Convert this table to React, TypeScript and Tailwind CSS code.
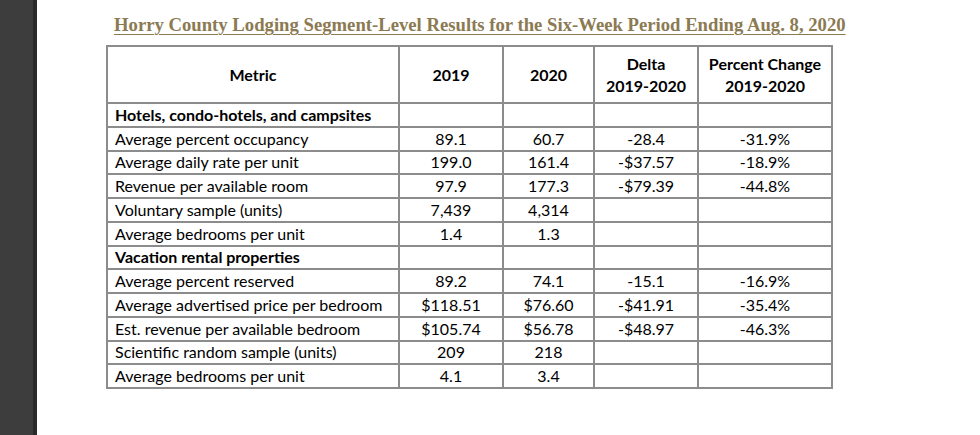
import React from "react";

type Row = { label: string; bold?: boolean; a?: string; b?: string; c?: string; d?: string };

const rows: Row[] = [
  { label: "Hotels, condo-hotels, and campsites", bold: true },
  { label: "Average percent occupancy", a: "89.1", b: "60.7", c: "-28.4", d: "-31.9%" },
  { label: "Average daily rate per unit", a: "199.0", b: "161.4", c: "-$37.57", d: "-18.9%" },
  { label: "Revenue per available room", a: "97.9", b: "177.3", c: "-$79.39", d: "-44.8%" },
  { label: "Voluntary sample (units)", a: "7,439", b: "4,314" },
  { label: "Average bedrooms per unit", a: "1.4", b: "1.3" },
  { label: "Vacation rental properties", bold: true },
  { label: "Average percent reserved", a: "89.2", b: "74.1", c: "-15.1", d: "-16.9%" },
  { label: "Average advertised price per bedroom", a: "$118.51", b: "$76.60", c: "-$41.91", d: "-35.4%" },
  { label: "Est. revenue per available bedroom", a: "$105.74", b: "$56.78", c: "-$48.97", d: "-46.3%" },
  { label: "Scientific random sample (units)", a: "209", b: "218" },
  { label: "Average bedrooms per unit", a: "4.1", b: "3.4" },
];

const cell = "border-2 border-[#8c8c8c] p-0 whitespace-nowrap";

export default function App() {
  return (
    <div className="flex h-[435px] w-[980px] overflow-hidden bg-white">
      <div className="h-full w-[37px] shrink-0 border-r-[4px] border-[#2a2a2a] bg-[#3d3d3d]" />
      <div className="flex flex-col">
        <div
          className="ml-[77px] mt-[14px] whitespace-nowrap text-[18.7px] font-bold leading-[22px] text-[#8b7a52] underline decoration-[1px] underline-offset-[3px]"
          style={{ fontFamily: '"Liberation Serif", "Times New Roman", serif' }}
        >
          Horry County Lodging Segment-Level Results for the Six-Week Period Ending Aug. 8, 2020
        </div>
        <table
          className="ml-[69px] mt-[9px] w-[725px] table-fixed border-collapse text-[16px] leading-[20px] text-black"
          style={{ fontFamily: 'Lato, "Open Sans", sans-serif' }}
        >
          <colgroup>
            <col className="w-[292px]" />
            <col className="w-[104px]" />
            <col className="w-[91px]" />
            <col className="w-[104px]" />
            <col className="w-[134px]" />
          </colgroup>
          <thead>
            <tr className="h-[57px] font-bold">
              <td className={`${cell} text-center`}>Metric</td>
              <td className={`${cell} text-center`}>2019</td>
              <td className={`${cell} text-center`}>2020</td>
              <td className={`${cell} text-center leading-[22px]`}>
                Delta
                <br />
                2019-2020
              </td>
              <td className={`${cell} text-center leading-[22px]`}>
                Percent Change
                <br />
                2019-2020
              </td>
            </tr>
          </thead>
          <tbody>
            {rows.map((r, i) => (
              <tr key={i} className="h-[23.75px]">
                <td className={`${cell} pl-[7px] ${r.bold ? "font-bold" : ""}`}>{r.label}</td>
                <td className={`${cell} text-center`}>{r.a ?? ""}</td>
                <td className={`${cell} text-center`}>{r.b ?? ""}</td>
                <td className={`${cell} text-center`}>{r.c ?? ""}</td>
                <td className={`${cell} text-center`}>{r.d ?? ""}</td>
              </tr>
            ))}
          </tbody>
        </table>
      </div>
    </div>
  );
}
